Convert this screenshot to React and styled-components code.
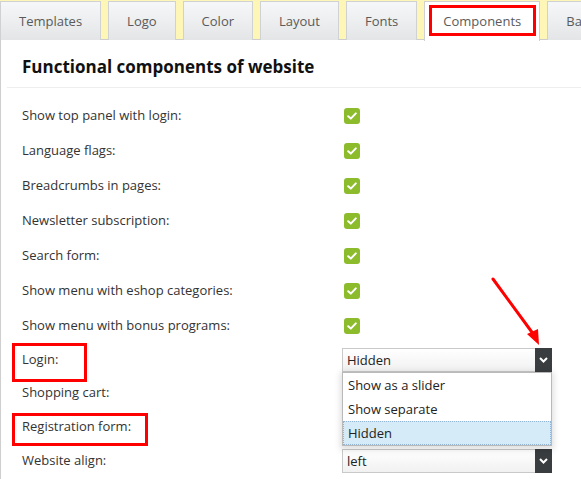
import React from 'react'
import styled, { createGlobalStyle, css } from 'styled-components'

const GlobalStyle = createGlobalStyle`
	html, body {margin: 0; padding: 0; background: #fff; overflow: hidden;}
	body {font-family: "Open Sans", "Noto Sans", "Liberation Sans", sans-serif;}
	* {box-sizing: border-box;}
`

const tabs = ['Templates', 'Logo', 'Color', 'Layout', 'Fonts', 'Components', 'Background']

const rows = [
	{label: 'Show top panel with login:', type: 'check'},
	{label: 'Language flags:', type: 'check'},
	{label: 'Breadcrumbs in pages:', type: 'check'},
	{label: 'Newsletter subscription:', type: 'check'},
	{label: 'Search form:', type: 'check'},
	{label: 'Show menu with eshop categories:', type: 'check'},
	{label: 'Show menu with bonus programs:', type: 'check'},
	{label: 'Login:', type: 'select', value: 'Hidden', open: true, mark: {w: 69, h: 33}},
	{label: 'Shopping cart:', type: 'select', value: ''},
	{label: 'Registration form:', type: 'select', value: '', mark: {w: 130, h: 27}},
	{label: 'Website align:', type: 'select', value: 'left'},
]

const options = ['Show as a slider', 'Show separate', 'Hidden']

function Check() {
	return (
		<CheckBox>
			<svg width="10" height="8" viewBox="0 0 10 8">
				<path d="M1.2 4.2 L3.8 6.6 L8.8 1.4" fill="none" stroke="#fff" strokeWidth="2" strokeLinecap="round" strokeLinejoin="round" />
			</svg>
		</CheckBox>
	)
}

function Select({ value, open }) {
	return (
		<SelectBox>
			<SelectValue>{value}</SelectValue>
			<SelectArrow>
				<svg width="9" height="6" viewBox="0 0 9 6">
					<path d="M1 1 L4.5 4.5 L8 1" fill="none" stroke="#fff" strokeWidth="2" />
				</svg>
			</SelectArrow>
			{open && (
				<OptionList>
					{options.map((o) => (
						<Option key={o} selected={o === value}>{o}</Option>
					))}
				</OptionList>
			)}
		</SelectBox>
	)
}

export default function App() {
	return (
		<>
			<GlobalStyle />
			<Page>
				<TabBar>
					{tabs.map((t) => (
						<Tab key={t} active={t === 'Components'}>{t}</Tab>
					))}
				</TabBar>
				<Panel>
					<Header>
						<Title>Functional components of website</Title>
					</Header>
					<List>
						{rows.map((r) => (
							<Row key={r.label} tall={r.type === 'check'}>
								<Label mark={r.mark}>{r.label}</Label>
								<Control>
									{r.type === 'check' ? <Check /> : <Select value={r.value} open={r.open} />}
								</Control>
							</Row>
						))}
					</List>
				</Panel>
				<Arrow width="70" height="80" viewBox="0 0 70 80">
					<line x1="3" y1="3" x2="44" y2="59" stroke="#f00" strokeWidth="3" strokeLinecap="round" />
					<polygon points="49,69 37,58 48,53" fill="#f00" />
				</Arrow>
			</Page>
		</>
	)
}

const Page = styled.div`
	position: relative; width: 581px; height: 479px; overflow: hidden;
`
const TabBar = styled.div`
	display: flex; gap: 7px; height: 40px; background: #fdf6b6; border-bottom: 1px solid #cdcdcd; padding-top: 1px; white-space: nowrap;
`
const Tab = styled.div`
	position: relative; flex: none; height: 39px; padding: 0 18px 1px; display: flex; align-items: center;
	font-size: 13px; color: #5a5a5a; border: 1px solid #cfd1d3; border-bottom: 0;
	background: linear-gradient(#f6f7f8, #e3e5e7);
	${(p) => p.active && css`
		background: #fff; height: 40px; margin-bottom: -1px;
		&:after {content: ''; position: absolute; left: 4px; right: 3px; top: 3px; bottom: 5px; border: 3px solid #f00;}
	`}
`
const Panel = styled.div`
	border-left: 1px solid #cfcfcf; background: #fff; height: 440px;
`
const Header = styled.div`
	margin-left: 6px; padding: 15px 0 9px 15px; border-bottom: 1px solid #eeeeee;
`
const Title = styled.h1`
	margin: 0; font-size: 17px; line-height: 23px; font-weight: 700; color: #111;
`
const List = styled.div`
	padding: 10px 0 0 21px;
`
const Row = styled.div`
	display: grid; grid-template-columns: 320px 210px; align-items: center;
	height: ${(p) => (p.tall ? '35px' : '34px')};
	&:nth-child(8) {height: 33px;}
`
const Label = styled.span`
	position: relative; justify-self: start; font-size: 13px; color: #333; line-height: 20px; margin-top: -2px;
	${(p) => p.mark && css`
		&:before {content: ''; position: absolute; left: -10px; top: 50%; width: ${p.mark.w}px; height: ${p.mark.h}px;
			margin-top: -${Math.round(p.mark.h / 2) - 1}px; border: 3px solid #f00;}
	`}
`
const Control = styled.div`
	display: flex; align-items: center;
`
const CheckBox = styled.span`
	width: 16px; height: 16px; margin: 1px 0 0 2px; border-radius: 3px; background: #8cbb2b;
	display: flex; align-items: center; justify-content: center;
`
const SelectBox = styled.div`
	position: relative; width: 210px; height: 24px; border: 1px solid #c9c9c9;
	background: linear-gradient(#ffffff, #f1f1f1); display: flex; align-items: center;
`
const SelectValue = styled.span`
	flex: 1; padding-left: 4px; font-size: 13px; color: #222;
`
const SelectArrow = styled.span`
	align-self: stretch; width: 17px; margin: -1px -1px -1px 0; background: #393d40;
	display: flex; align-items: center; justify-content: center;
`
const OptionList = styled.div`
	position: absolute; z-index: 5; left: -1px; top: 23px; width: 210px; background: #fff;
	border: 1px solid #b9b9b9; box-shadow: 0 2px 6px 2px rgba(0,0,0,0.12);
`
const Option = styled.div`
	height: 24px; line-height: 22px; padding-left: 4px; font-size: 13px; color: #222;
	border: 1px dotted transparent;
	${(p) => p.selected && css`background: #d5ebf8; border-color: #8fb4d8;`}
`
const Arrow = styled.svg`
	position: absolute; left: 490px; top: 276px; overflow: visible;
`
